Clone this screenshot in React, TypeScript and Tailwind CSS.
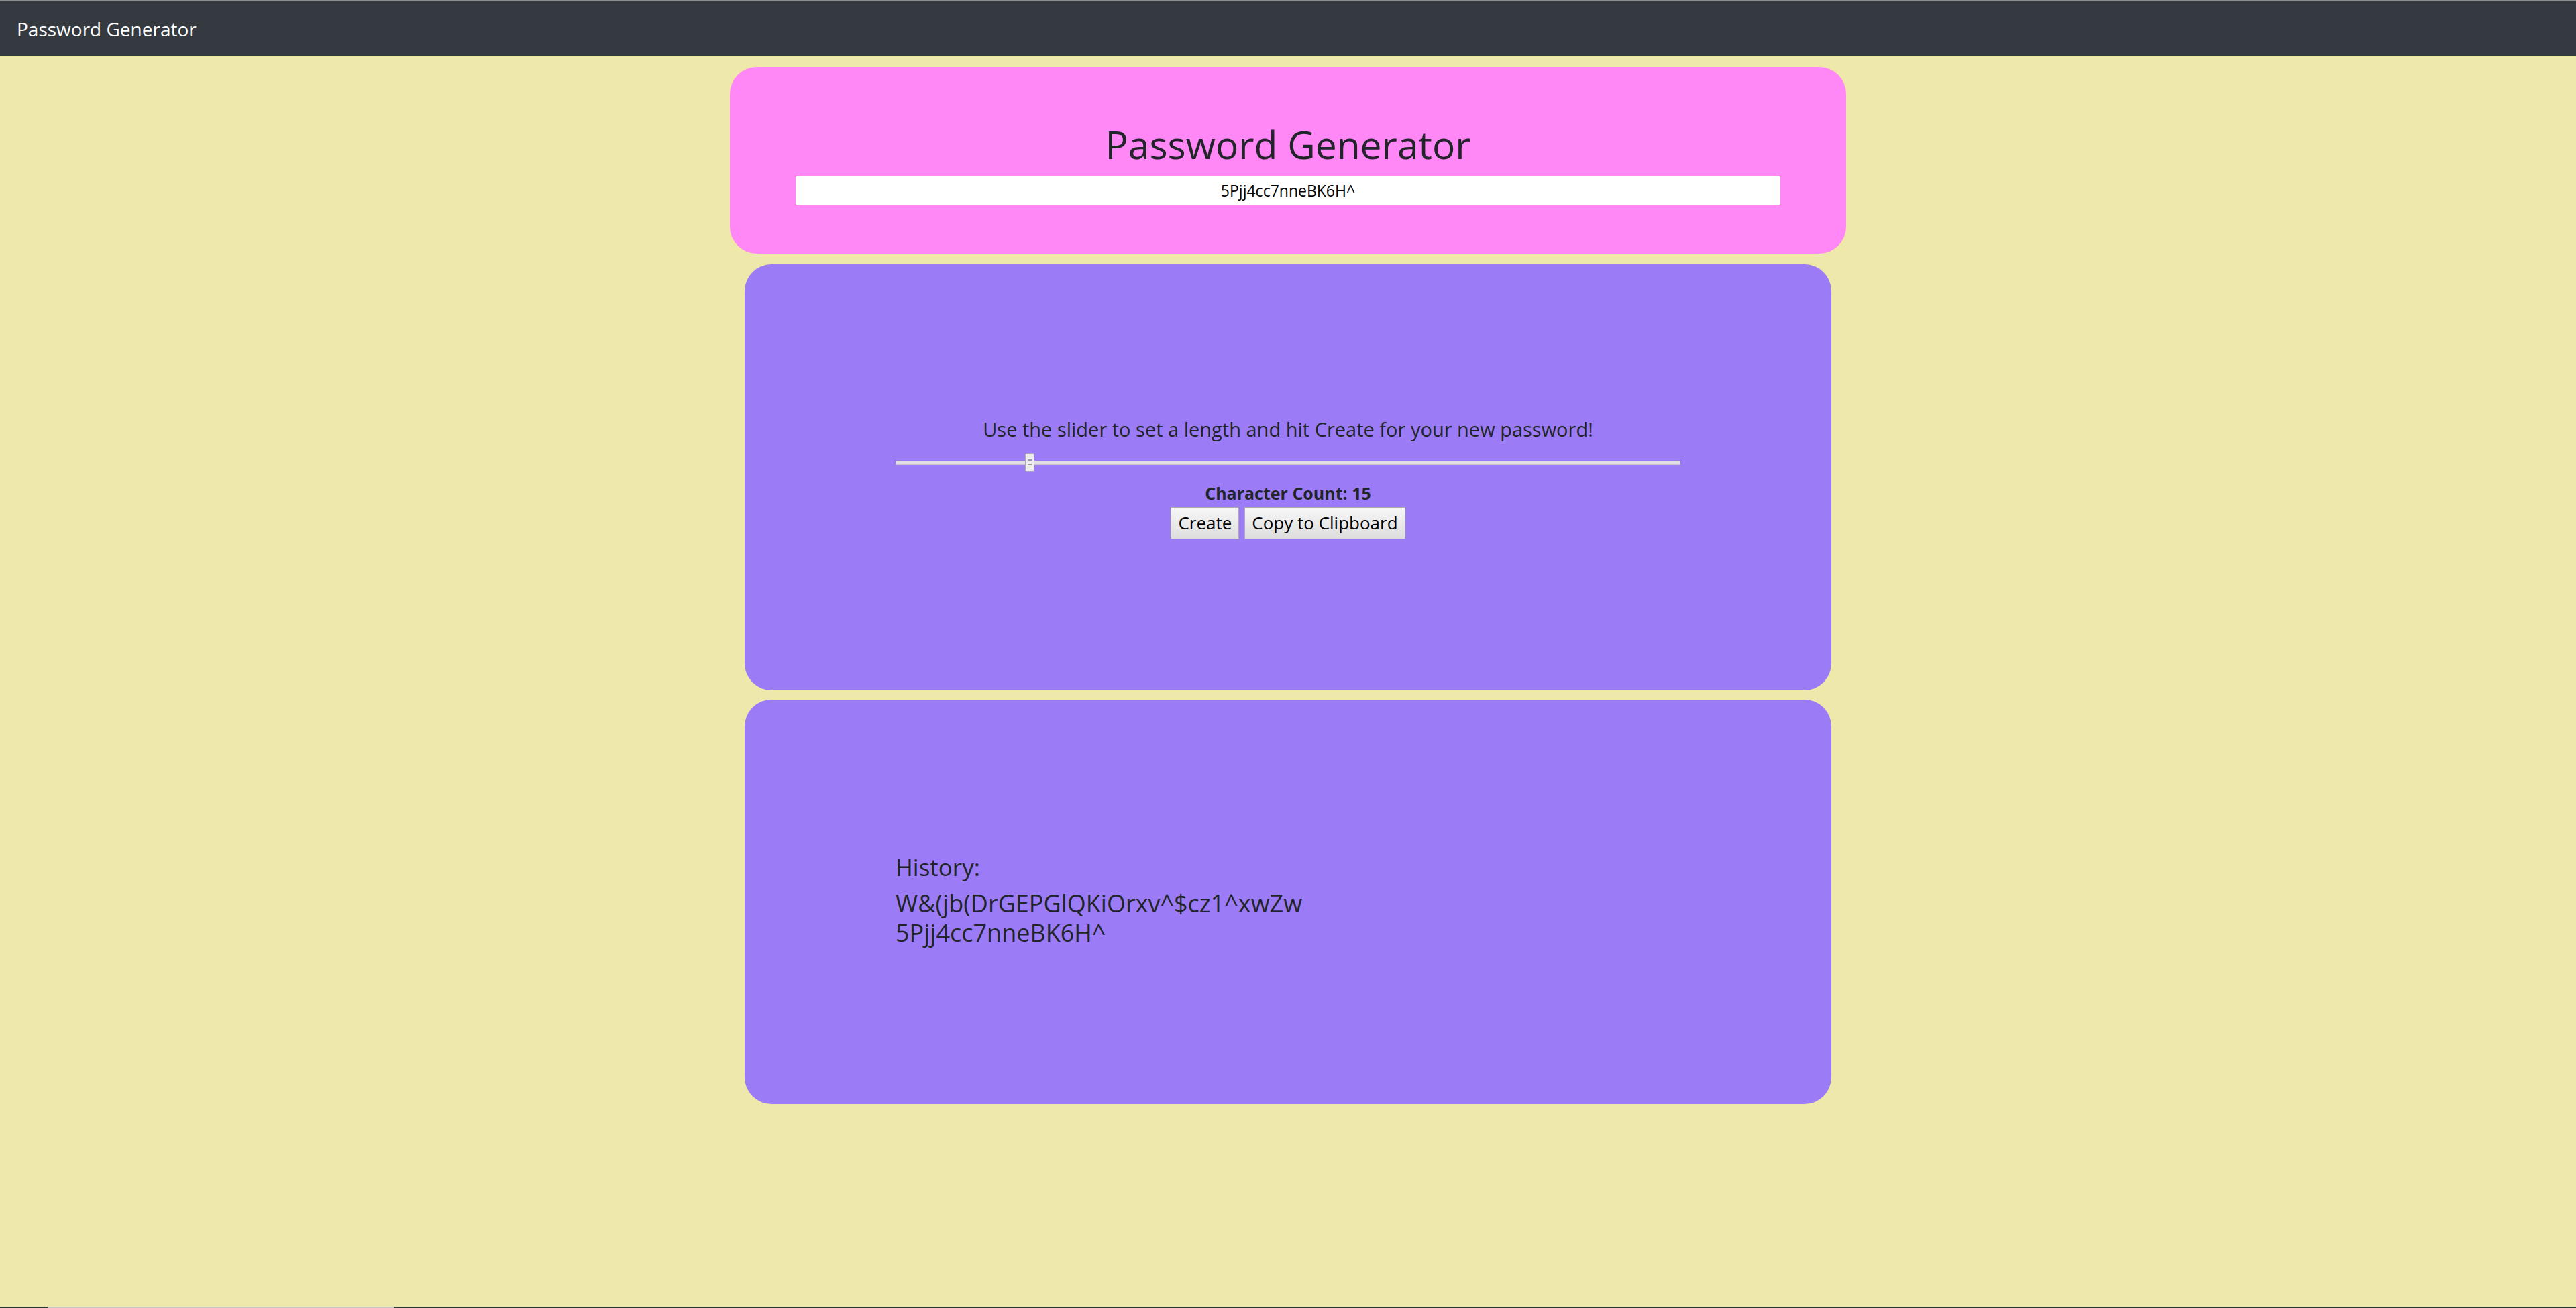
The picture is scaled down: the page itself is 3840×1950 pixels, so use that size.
const history = ["W&(jb(DrGEPGlQKiOrxv^$cz1^xwZw", "5Pjj4cc7nneBK6H^"];

const font = { fontFamily: '"Open Sans", "Noto Sans", sans-serif' };

function Slider({ value, min, max }: { value: number; min: number; max: number }) {
  const pct = ((value - min) / (max - min)) * 100;
  return (
    <div className="relative w-[1170px] h-[28px] flex items-center">
      <div className="w-full h-[6px] bg-[#e2dee3] border-b border-[#c9c4cc]" />
      <div
        className="absolute top-0 w-[14px] h-[27px] bg-[#eeeeee] border border-[#a9a9a9] rounded-[2px] flex flex-col items-center justify-center gap-[4px]"
        style={{ left: `calc(${pct}% - 7px)` }}
      >
        <div className="w-[6px] h-[2px] bg-[#9a9a9a]" />
        <div className="w-[6px] h-[2px] bg-[#9a9a9a]" />
      </div>
    </div>
  );
}

export default function App() {
  return (
    <div className="min-h-[1950px] flex flex-col bg-[#eee8aa] text-[#212529]" style={font}>
      <nav className="h-[84px] shrink-0 bg-[#343a40] border-t border-[#8d8d8d] px-[25px] flex items-center">
        <span className="text-white text-[28px]">Password Generator</span>
      </nav>

      <main className="flex flex-col items-center pt-[16px]">
        <section className="w-[1664px] h-[278px] bg-[#ff88f6] rounded-[40px] flex flex-col items-center justify-center pt-[6px]">
          <h1 className="text-[57px] leading-[74px] mb-[10px]">Password Generator</h1>
          <div className="w-[1468px] h-[44px] bg-white border border-[#b9a9b9] flex items-center justify-center text-[23px] text-black">
            5Pjj4cc7nneBK6H^
          </div>
        </section>

        <section className="mt-[16px] w-[1620px] h-[635px] bg-[#9c7cf6] rounded-[40px] flex flex-col items-center justify-center">
          <p className="text-[29px] leading-[40px]">Use the slider to set a length and hit Create for your new password!</p>
          <div className="mt-[16px]">
            <Slider value={15} min={8} max={49} />
          </div>
          <p className="mt-[16px] text-[25px] leading-[30px] font-bold">Character Count: 15</p>
          <div className="mt-[6px] flex gap-[8px]">
            <button className="h-[48px] px-[10px] text-[26px] text-black bg-gradient-to-b from-[#f7f7f7] to-[#dddddd] border border-[#adadad]">
              Create
            </button>
            <button className="h-[48px] px-[10px] text-[26px] text-black bg-gradient-to-b from-[#f7f7f7] to-[#dddddd] border border-[#adadad]">
              Copy to Clipboard
            </button>
          </div>
        </section>

        <section className="mt-[14px] w-[1620px] h-[603px] bg-[#9c7cf6] rounded-[40px] flex flex-col justify-center">
          <div className="w-[1170px] mx-auto mb-[6px]">
            <h4 className="text-[35px] leading-[44px] mb-[10px]">History:</h4>
            {history.map((pw, i) => (
              <div key={i} className="text-[36px] leading-[44px]">
                {pw}
              </div>
            ))}
          </div>
        </section>
      </main>

      <div className="mt-auto h-[2px] bg-[#2f3a2f] flex">
        <div className="ml-[71px] w-[517px] bg-[#c4c4bc]" />
      </div>
    </div>
  );
}
